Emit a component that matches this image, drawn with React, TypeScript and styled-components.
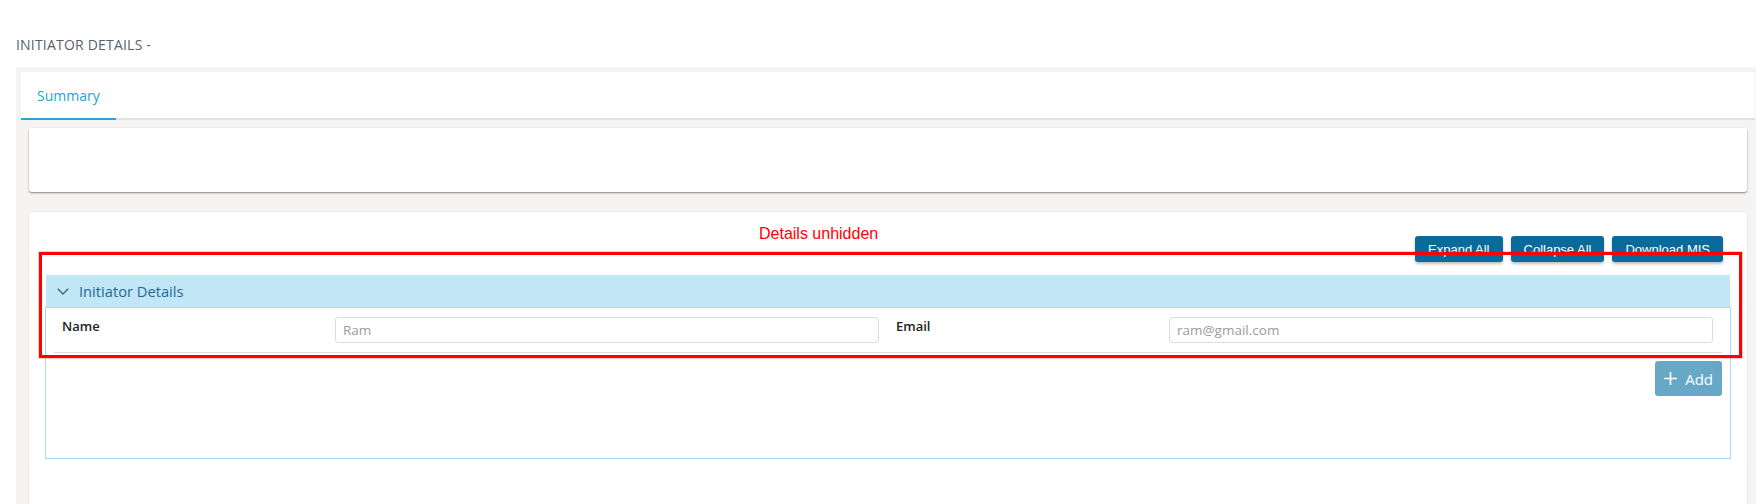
import React from "react";
import styled, { createGlobalStyle } from "styled-components";

const GlobalStyle = createGlobalStyle`
  html, body {
    margin: 0;
    padding: 0;
    background: #ffffff;
    overflow: hidden;
  }
  body {
    font-family: "Open Sans", "Noto Sans", sans-serif;
  }
  * { box-sizing: border-box; }
`;

const Page = styled.div`
  padding-left: 16px;
  height: 504px;
  display: flex;
  flex-direction: column;
`;

const PageTitle = styled.h1`
  margin: 35px 0 13px;
  font-size: 14px;
  line-height: 19px;
  font-weight: 400;
  color: #56626d;
  letter-spacing: 0.2px;
`;

const Panel = styled.section`
  flex: 1;
  background: #f5f4f3;
  padding: 5px 1px 0 5px;
  display: flex;
  flex-direction: column;
`;

const TabBar = styled.nav`
  height: 48px;
  background: #ffffff;
  border-bottom: 2px solid #dee2e6;
  display: flex;
  align-items: stretch;
`;

const Tab = styled.div<{ $active?: boolean }>`
  padding: 0 16px;
  display: flex;
  align-items: center;
  font-size: 14px;
  color: ${(p) => (p.$active ? "#2a9fd2" : "#666")};
  border-bottom: 2px solid ${(p) => (p.$active ? "#2ba4cf" : "transparent")};
  margin-bottom: -2px;
`;

const Content = styled.div`
  flex: 1;
  padding: 8px 8px 0;
  display: flex;
  flex-direction: column;
`;

const SummaryCard = styled.div`
  height: 64px;
  background: #ffffff;
  border-radius: 3px;
  box-shadow: 0 1px 2px rgba(0, 0, 0, 0.45);
  margin-bottom: 20px;
`;

const DetailCard = styled.div`
  position: relative;
  flex: 1;
  background: #ffffff;
  border-radius: 4px;
  box-shadow: 0 0 2px rgba(0, 0, 0, 0.12);
  padding: 24px 16px 60px;
`;

const ButtonRow = styled.div`
  display: flex;
  justify-content: flex-end;
  gap: 8px;
  padding-right: 8px;
`;

const ActionButton = styled.button`
  height: 26px;
  padding: 0 13px;
  border: none;
  border-radius: 3px;
  background: #0a6a9a;
  color: #ffffff;
  font-family: "Liberation Sans", Arial, sans-serif;
  font-size: 13px;
  box-shadow: 0 2px 3px rgba(0, 0, 0, 0.25);
  cursor: pointer;
`;

const Accordion = styled.div`
  margin-top: 13px;
`;

const AccordionHeader = styled.div`
  height: 32px;
  margin: 0 1px;
  background: #c1e6f6;
  display: flex;
  align-items: center;
  padding-left: 11px;
  gap: 10px;
  color: #1f6a95;
  font-size: 14.7px;
`;

const AccordionBody = styled.div`
  height: 152px;
  border: 1px solid #a7dbf5;
  padding: 0 8px;
`;

const FieldRow = styled.div`
  display: grid;
  grid-template-columns: 1fr 2fr 1fr 2fr;
  padding: 9px 0;
  border-bottom: 1px solid #dcdcdc;
`;

const FieldLabel = styled.label`
  padding-left: 8px;
  font-size: 13px;
  line-height: 18px;
  font-weight: 600;
  color: #222;
`;

const FieldCell = styled.div`
  padding: 0 9px 0 3px;
`;

const TextInput = styled.input`
  width: 100%;
  height: 26px;
  border: 1px solid #dcdcdc;
  border-radius: 3px;
  padding: 0 7px;
  font-family: "Open Sans", sans-serif;
  font-size: 13.5px;
  color: #333;
  outline: none;
  &::placeholder {
    color: #9b9b9b;
  }
`;

const AddRow = styled.div`
  display: flex;
  justify-content: flex-end;
  padding-top: 8px;
`;

const AddButton = styled.button`
  height: 35px;
  padding: 0 9px;
  border: none;
  border-radius: 3px;
  background: #68a8c7;
  color: #ffffff;
  display: flex;
  align-items: center;
  gap: 8px;
  font-family: "Open Sans", sans-serif;
  font-size: 15px;
`;

const Annotation = styled.div`
  position: absolute;
  left: 730px;
  top: 13px;
  font-family: "Liberation Sans", Arial, sans-serif;
  font-size: 16px;
  color: #ff0000;
  pointer-events: none;
`;

const HighlightBox = styled.div`
  position: absolute;
  left: 10px;
  top: 40px;
  width: 1703px;
  height: 106px;
  border: 3px solid #ff0000;
  box-shadow: 0 0 0 0.5px rgba(255, 0, 0, 0.4);
  pointer-events: none;
  z-index: 2;
`;

const Chevron = () => (
  <svg width="12" height="7" viewBox="0 0 12 7" fill="none">
    <polyline points="0.8,0.8 6,6 11.2,0.8" stroke="#2a6a8f" strokeWidth="1.3" />
  </svg>
);

const PlusIcon = () => (
  <svg width="13" height="13" viewBox="0 0 13 13" fill="none">
    <path d="M6.5 0V13M0 6.5H13" stroke="#ffffff" strokeWidth="1.6" />
  </svg>
);

export default function App() {
  return (
    <>
      <GlobalStyle />
      <Page>
        <PageTitle>INITIATOR DETAILS -</PageTitle>
        <Panel>
          <TabBar>
            <Tab $active>Summary</Tab>
          </TabBar>
          <Content>
            <SummaryCard />
            <DetailCard>
              <ButtonRow>
                <ActionButton>Expand All</ActionButton>
                <ActionButton>Collapse All</ActionButton>
                <ActionButton>Download MIS</ActionButton>
              </ButtonRow>
              <Accordion>
                <AccordionHeader>
                  <Chevron />
                  <span>Initiator Details</span>
                </AccordionHeader>
                <AccordionBody>
                  <FieldRow>
                    <FieldLabel>Name</FieldLabel>
                    <FieldCell>
                      <TextInput placeholder="Ram" />
                    </FieldCell>
                    <FieldLabel>Email</FieldLabel>
                    <FieldCell>
                      <TextInput placeholder="ram@gmail.com" />
                    </FieldCell>
                  </FieldRow>
                  <AddRow>
                    <AddButton>
                      <PlusIcon />
                      <span>Add</span>
                    </AddButton>
                  </AddRow>
                </AccordionBody>
              </Accordion>
              <Annotation>Details unhidden</Annotation>
              <HighlightBox />
            </DetailCard>
          </Content>
        </Panel>
      </Page>
    </>
  );
}
